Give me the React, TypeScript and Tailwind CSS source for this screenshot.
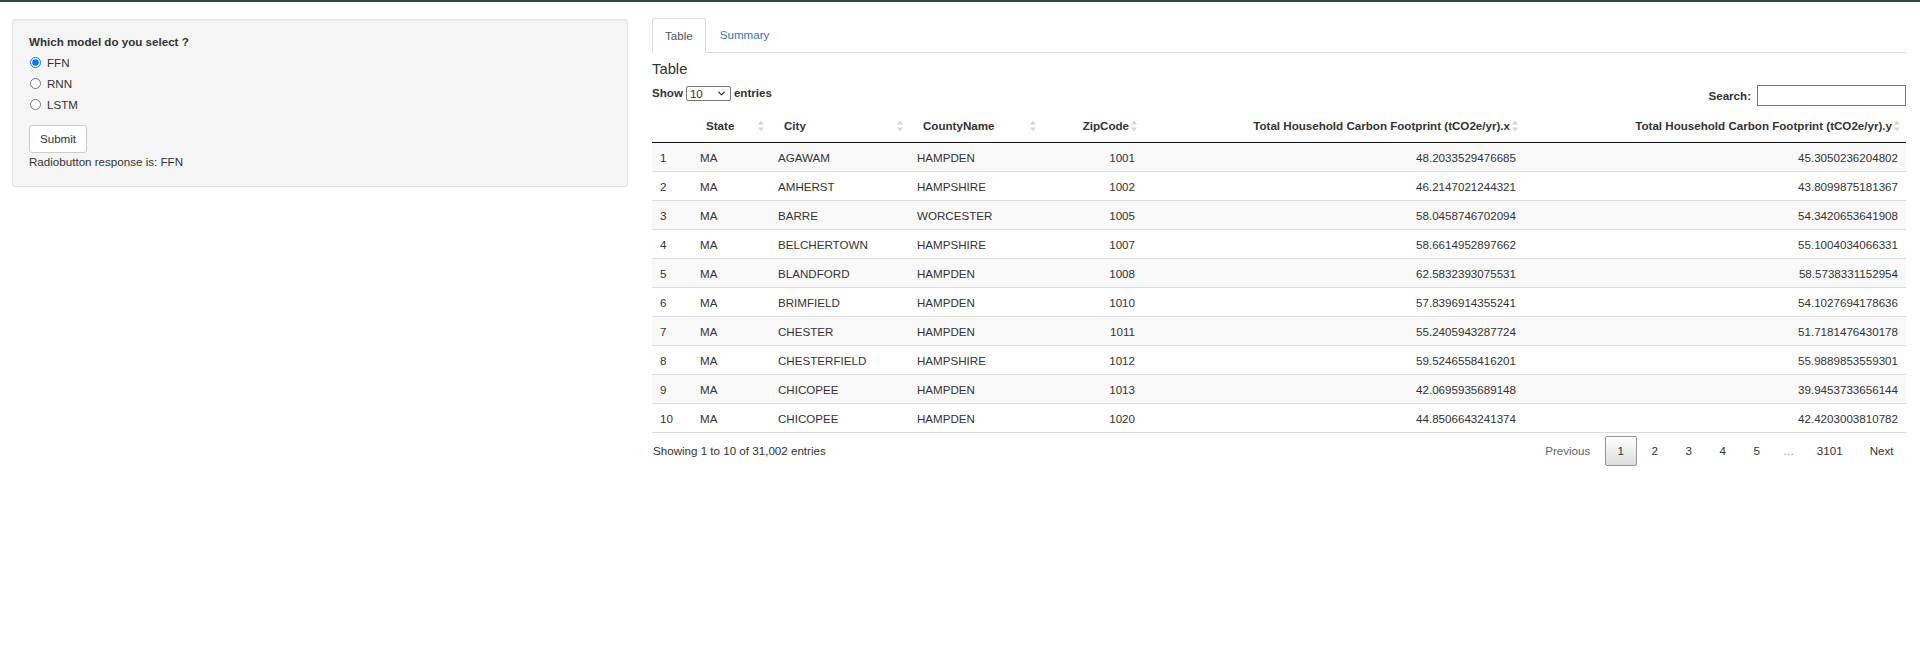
import { ChevronDown } from "lucide-react";

type Row = {
  id: number;
  state: string;
  city: string;
  county: string;
  zip: string;
  x: string;
  y: string;
};

const rows: Row[] = [
  { id: 1, state: "MA", city: "AGAWAM", county: "HAMPDEN", zip: "1001", x: "48.2033529476685", y: "45.3050236204802" },
  { id: 2, state: "MA", city: "AMHERST", county: "HAMPSHIRE", zip: "1002", x: "46.2147021244321", y: "43.8099875181367" },
  { id: 3, state: "MA", city: "BARRE", county: "WORCESTER", zip: "1005", x: "58.0458746702094", y: "54.3420653641908" },
  { id: 4, state: "MA", city: "BELCHERTOWN", county: "HAMPSHIRE", zip: "1007", x: "58.6614952897662", y: "55.1004034066331" },
  { id: 5, state: "MA", city: "BLANDFORD", county: "HAMPDEN", zip: "1008", x: "62.5832393075531", y: "58.5738331152954" },
  { id: 6, state: "MA", city: "BRIMFIELD", county: "HAMPDEN", zip: "1010", x: "57.8396914355241", y: "54.1027694178636" },
  { id: 7, state: "MA", city: "CHESTER", county: "HAMPDEN", zip: "1011", x: "55.2405943287724", y: "51.7181476430178" },
  { id: 8, state: "MA", city: "CHESTERFIELD", county: "HAMPSHIRE", zip: "1012", x: "59.5246558416201", y: "55.9889853559301" },
  { id: 9, state: "MA", city: "CHICOPEE", county: "HAMPDEN", zip: "1013", x: "42.0695935689148", y: "39.9453733656144" },
  { id: 10, state: "MA", city: "CHICOPEE", county: "HAMPDEN", zip: "1020", x: "44.8506643241374", y: "42.4203003810782" },
];

const SortIcon = () => (
  <svg
    width="6"
    height="11"
    viewBox="0 0 6 11"
    className="absolute right-[6px] top-1/2 -translate-y-1/2"
  >
    <polygon points="0,4 3,0 6,4" fill="#d6d6d6" />
    <polygon points="0,7 3,11 6,7" fill="#d6d6d6" />
  </svg>
);

const Th = ({ label, right }: { label: string; right?: boolean }) => (
  <th
    className={`relative py-[8px] pl-[14px] pr-[14px] font-bold border-b border-[#111] ${
      right ? "text-right" : "text-left"
    }`}
  >
    {label}
    <SortIcon />
  </th>
);

const Sidebar = () => {
  const options = ["FFN", "RNN", "LSTM"];
  return (
    <div className="w-[616px] shrink-0 mt-[1px]">
      {/* sidebar well */}
      <div className="bg-[#f5f5f5] border border-[#e3e3e3] rounded-[3px] shadow-[inset_0_1px_1px_rgba(0,0,0,0.05)] px-[16px] pt-[14px] pb-[16px]">
        <div className="font-bold leading-[16px] mb-[2px]">
          Which model do you select ?
        </div>
        {options.map((opt, i) => (
          <label key={opt} className="flex items-center h-[21px] gap-[6px] pl-[1px]">
            <input
              type="radio"
              name="model"
              defaultChecked={i === 0}
              className="w-[11px] h-[11px] m-0"
            />
            <span>{opt}</span>
          </label>
        ))}
        <button className="mt-[10px] h-[28px] w-[58px] bg-white border border-[#ccc] rounded-[3px] text-[#333]">
          Submit
        </button>
        <div className="leading-[16px] mt-[1px]">Radiobutton response is: FFN</div>
      </div>
    </div>
  );
};

const Pagination = () => {
  const pages = ["1", "2", "3", "4", "5"];
  return (
    <div className="flex items-center">
      <span className="px-[11.5px] py-[6px] leading-[16px] text-[#666] border border-transparent">
        Previous
      </span>
      {pages.map((p) =>
        p === "1" ? (
          <span
            key={p}
            className="ml-[2px] px-[11.5px] py-[6px] leading-[16px] min-w-[32px] text-center border border-[#979797] rounded-[2px] bg-gradient-to-b from-white to-[#dcdcdc]"
          >
            {p}
          </span>
        ) : (
          <span key={p} className="ml-[2px] px-[11.5px] py-[6px] leading-[16px] min-w-[32px] text-center border border-transparent">
            {p}
          </span>
        )
      )}
      <span className="px-[10px] leading-[16px] text-[#999]">…</span>
      <span className="px-[11.5px] py-[6px] leading-[16px] border border-transparent">3101</span>
      <span className="ml-[2px] px-[11.5px] py-[6px] leading-[16px] border border-transparent">Next</span>
    </div>
  );
};

const DataTable = () => (
  <div>
    {/* length + search */}
    <div className="flex justify-between items-start mt-[8px] h-[21px]">
      <div className="flex items-center font-bold leading-[16px] gap-[3px]">
        <span>Show</span>
        <span className="flex items-center justify-between w-[45px] h-[15px] border border-[#767676] rounded-[2px] px-[3px] font-normal bg-white mt-[1px]">
          <span className="leading-[13px]">10</span>
          <ChevronDown className="w-[11px] h-[11px]" strokeWidth={3} />
        </span>
        <span>entries</span>
      </div>
      <div className="flex items-center font-bold gap-[6px]">
        <span>Search:</span>
        <span className="block w-[149px] h-[21px] border border-[#767676] bg-white" />
      </div>
    </div>

    <table className="table-fixed w-[1254px] border-collapse mt-[4px]">
      <colgroup>
        <col className="w-[40px]" />
        <col className="w-[78px]" />
        <col className="w-[139px]" />
        <col className="w-[133px]" />
        <col className="w-[101px]" />
        <col className="w-[381px]" />
        <col className="w-[382px]" />
      </colgroup>
      <thead>
        <tr className="leading-[16px]">
          <th className="py-[8px] border-b border-[#111]"></th>
          <Th label="State" />
          <Th label="City" />
          <Th label="CountyName" />
          <Th label="ZipCode" right />
          <Th label="Total Household Carbon Footprint (tCO2e/yr).x" right />
          <Th label="Total Household Carbon Footprint (tCO2e/yr).y" right />
        </tr>
      </thead>
      <tbody>
        {rows.map((r, i) => (
          <tr
            key={r.id}
            className={`h-[29px] leading-[16px] ${i % 2 === 0 ? "bg-[#f9f9f9]" : "bg-white"} ${
              i > 0 ? "border-t border-[#ddd]" : ""
            } ${i === rows.length - 1 ? "border-b border-[#111]" : ""}`}
          >
            <td className="px-[8px] pt-[1px]">{r.id}</td>
            <td className="px-[8px] pt-[1px]">{r.state}</td>
            <td className="px-[8px] pt-[1px]">{r.city}</td>
            <td className="px-[8px] pt-[1px]">{r.county}</td>
            <td className="px-[8px] pt-[1px] text-right">{r.zip}</td>
            <td className="px-[8px] pt-[1px] text-right">{r.x}</td>
            <td className="px-[8px] pt-[1px] text-right">{r.y}</td>
          </tr>
        ))}
      </tbody>
    </table>

    {/* info + pagination */}
    <div className="flex justify-between items-center mt-[3px]">
      <div className="leading-[16px] pl-[1px]">Showing 1 to 10 of 31,002 entries</div>
      <Pagination />
    </div>
  </div>
);

const MainPanel = () => (
  <div className="w-[1254px] shrink-0">
    {/* tabs */}
    <div className="flex border-b border-[#ddd] h-[35px]">
      <div className="h-[35px] px-[12px] flex items-center bg-white border border-[#ddd] border-b-white rounded-t-[3px] text-[#555] -mb-px">
        Table
      </div>
      <div className="h-[34px] ml-[2px] px-[12px] flex items-center text-[#337ab7]">
        Summary
      </div>
    </div>

    <div className="text-[14.8px] leading-[16px] mt-[8px]">Table</div>

    <DataTable />
  </div>
);

export default function App() {
  return (
    <div
      className="w-[1920px] min-h-[655px] bg-white text-[#333] text-[11.6px] border-t-2 border-[#2b4c47]"
      style={{ fontFamily: '"Liberation Sans", Arial, sans-serif' }}
    >
      <div className="flex gap-[24px] pl-[12px] pt-[16px]">
        <Sidebar />
        <MainPanel />
      </div>
    </div>
  );
}
